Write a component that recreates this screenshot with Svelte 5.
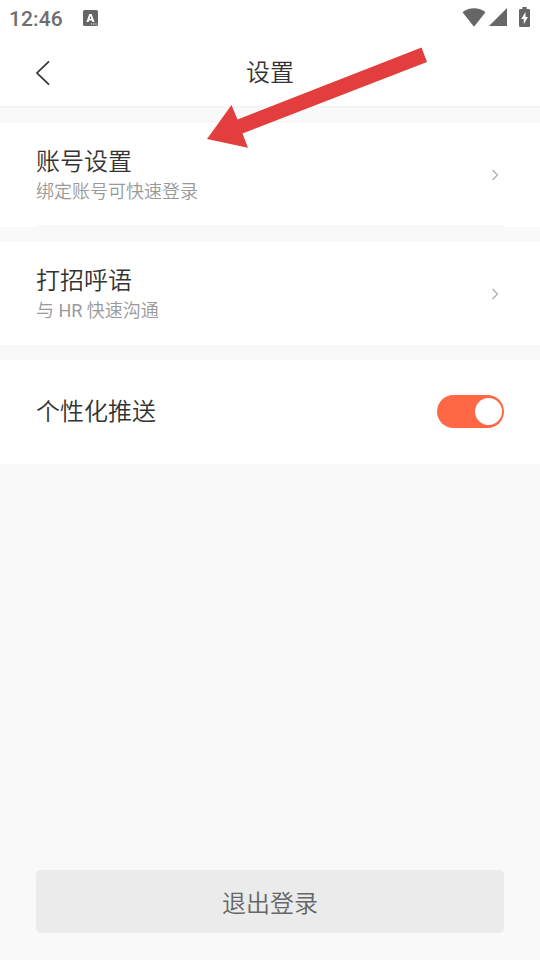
<script lang="ts">
	type LinkRow = {
		id: string;
		title: string;
		hint: string;
		divided: boolean;
	};

	const rows: LinkRow[] = [
		{ id: 'account', title: '账号设置', hint: '绑定账号可快速登录', divided: true },
		{ id: 'greeting', title: '打招呼语', hint: '与 HR 快速沟通', divided: false }
	];

	let pushEnabled = $state(true);
</script>

<div class="screen">
	<div class="status-bar">
		<span class="clock">12:46</span>
		<svg class="ime" width="15" height="16" viewBox="0 0 15 16">
			<rect width="15" height="16" rx="1.6" fill="#666" />
			<path d="M3.4 12 6.3 4h2.3l2.900 8H9.400l-.5-1.500H6L5.500 12zM6.500 8.800h1.900l-.95-2.800z" fill="#fff" />
			<path d="M8 13.4h1.2v1.2H8zM10.2 13.4h1.2v1.2h-1.2zM12.4 13.4h1.2v1.2h-1.2z" fill="#fff" />
		</svg>
		<div class="indicators">
			<svg width="24" height="19" viewBox="0 0 24 19">
				<path d="M.5 4.200C3.800 1.500 7.600.2 12 .2s8.200 1.300 11.500 4L12 18.700z" fill="#666" />
			</svg>
			<svg width="18" height="18" viewBox="0 0 18 18">
				<path d="M18 0v18H0z" fill="#666" />
			</svg>
			<svg class="battery" width="11" height="20" viewBox="0 0 11 20">
				<path d="M3.300 0h4.400v2H9.700Q11 2 11 3.300v15.400Q11 20 9.700 20H1.300Q0 20 0 18.700V3.300Q0 2 1.300 2h2z" fill="#666" />
				<path d="M6.500 5 2.300 12h2.500v5.200L8.900 10H6.500z" fill="#fff" />
			</svg>
		</div>
	</div>

	<header>
		<button class="back" aria-label="返回">
			<svg width="16" height="26" viewBox="0 0 16 26">
				<path d="M14 1.300 2 13l12 11.700" fill="none" stroke="#333" stroke-width="1.700" />
			</svg>
		</button>
		<h1>设置</h1>
	</header>

	<main>
		{#each rows as row (row.id)}
			<section class="row" class:divided={row.divided}>
				<div class="label">
					<h2>{row.title}</h2>
					<p>{row.hint}</p>
				</div>
				<svg class="chevron" width="8" height="12" viewBox="0 0 8 12">
					<path d="m1.500 1 5 5-5 5" fill="none" stroke="#aaa" stroke-width="1.100" />
				</svg>
			</section>
		{/each}

		<section class="row push">
			<h2>个性化推送</h2>
			<button
				class="switch"
				class:on={pushEnabled}
				role="switch"
				aria-checked={pushEnabled}
				aria-label="个性化推送"
				onclick={() => (pushEnabled = !pushEnabled)}
			>
				<span class="knob"></span>
			</button>
		</section>
	</main>

	<footer>
		<button class="logout">退出登录</button>
	</footer>

	<svg class="pointer" width="222" height="102" viewBox="206 47 222 102">
		<path d="M207 139 231.500 105l6 14.500L421.500 47.500l5.500 14.500L242.500 133.500l5.500 14.300z" fill="#e33e3e" />
	</svg>
</div>

<style>
	:global(body) {
		background: #f9f9f9;
	}

	.screen {
		position: relative;
		display: flex;
		flex-direction: column;
		box-sizing: border-box;
		width: 540px;
		height: 960px;
		overflow: hidden;
		background: #f9f9f9;
		color: #333;
		font-family: Roboto, 'Noto Sans CJK SC DemiLight', 'Noto Sans CJK SC', sans-serif;
		font-weight: 350;
	}

	h1,
	h2,
	p {
		margin: 0;
		font-weight: inherit;
	}

	button {
		border: none;
		padding: 0;
		font-family: inherit;
		font-weight: inherit;
		cursor: pointer;
	}

	svg {
		display: block;
		flex: none;
	}

	.status-bar {
		display: flex;
		align-items: center;
		box-sizing: border-box;
		height: 37px;
		padding: 0 10px 0 9px;
		background: #fff;
	}

	.clock {
		width: 74px;
		padding-top: 1px;
		color: #6e6e6e;
		font: 500 21px/37px Roboto, sans-serif;
		letter-spacing: 0.1px;
	}

	.ime {
		margin-bottom: 1px;
	}

	.indicators {
		display: flex;
		align-items: center;
		gap: 3px;
		margin-left: auto;
		padding-bottom: 3px;
	}

	.battery {
		margin-left: 9px;
	}

	header {
		display: grid;
		grid-template-columns: 60px 1fr 60px;
		align-items: center;
		box-sizing: border-box;
		height: 71px;
		border-bottom: 2px solid #f5f5f5;
		background: #fff;
	}

	.back {
		justify-self: end;
		margin-right: 9px;
		margin-top: 2px;
		background: none;
	}

	h1 {
		padding-top: 2px;
		font-size: 24px;
		line-height: 36px;
		text-align: center;
	}

	main {
		display: flex;
		flex-direction: column;
		gap: 15px;
		padding-top: 15px;
	}

	.row {
		position: relative;
		display: flex;
		align-items: center;
		justify-content: space-between;
		box-sizing: border-box;
		height: 104px;
		padding: 0 36px;
		background: #fff;
	}

	.row:nth-child(2) {
		height: 103px;
	}

	.push {
		padding-bottom: 2px;
	}

	.push h2 {
		padding-top: 2px;
	}

	.divided::after {
		content: '';
		position: absolute;
		right: 36px;
		bottom: 0;
		left: 36px;
		height: 2px;
		background: #f9f9f9;
	}

	h2 {
		font-size: 24px;
		line-height: 34px;
	}

	.label p {
		color: #999;
		font-size: 18px;
		font-weight: 400;
		line-height: 26px;
	}

	.chevron {
		margin-right: 5px;
	}

	.switch {
		display: flex;
		align-items: center;
		box-sizing: border-box;
		width: 67px;
		height: 33px;
		padding: 0 2px;
		border-radius: 17px;
		background: #ddd;
	}

	.switch.on {
		justify-content: flex-end;
		background: #ff6745;
	}

	.knob {
		width: 27px;
		height: 27px;
		border-radius: 50%;
		background: #fff;
	}

	footer {
		margin-top: auto;
		padding: 0 36px 27px;
	}

	.logout {
		display: block;
		width: 100%;
		height: 63px;
		padding-bottom: 1px;
		border-radius: 5px;
		background: #ebebeb;
		color: #666;
		font-size: 24px;
	}

	.pointer {
		position: absolute;
		top: 47px;
		left: 206px;
		pointer-events: none;
	}
</style>
